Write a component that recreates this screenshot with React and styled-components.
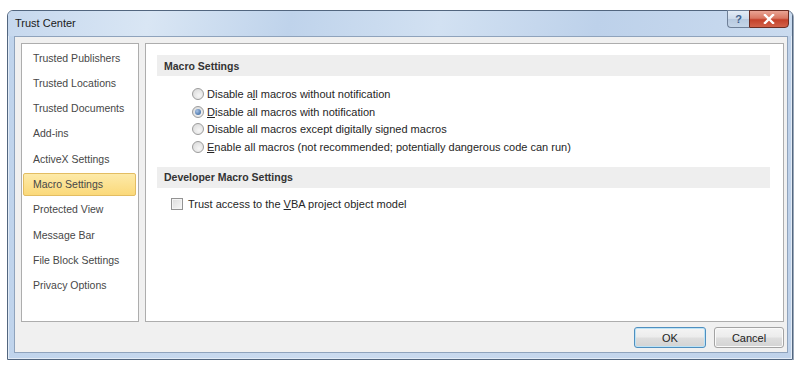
import React from 'react'
import styled, { createGlobalStyle } from 'styled-components'

const GlobalStyle = createGlobalStyle`
  html, body {
    margin: 0;
    background: #ffffff;
  }
  body {
    font-family: "Liberation Sans", Arial, sans-serif;
    font-size: 11px;
    color: #222;
  }
`

const navItems = [
  'Trusted Publishers',
  'Trusted Locations',
  'Trusted Documents',
  'Add-ins',
  'ActiveX Settings',
  'Macro Settings',
  'Protected View',
  'Message Bar',
  'File Block Settings',
  'Privacy Options',
]

const macroOptions = [
  <>Disable a<u>l</u>l macros without notification</>,
  <><u>D</u>isable all macros with notification</>,
  <>Disable all macros except di<u>g</u>itally signed macros</>,
  <><u>E</u>nable all macros (not recommended; potentially dangerous code can run)</>,
]

const App = () => {
  return (
    <>
      <GlobalStyle />
      <Page>
        <Window>
          <TitleBar>
            <Title>Trust Center</Title>
            <CaptionButtons>
              <HelpButton>?</HelpButton>
              <CloseButton>
                <svg width="12" height="10" viewBox="0 0 12 10">
                  <path d="M2 1 L10 9 M10 1 L2 9" stroke="#fff" strokeWidth="2.4" strokeLinecap="square" />
                </svg>
              </CloseButton>
            </CaptionButtons>
          </TitleBar>
          <Client>
            <Panels>
              <Nav>
                {navItems.map((item) => (
                  <NavItem key={item} $active={item === 'Macro Settings'}>{item}</NavItem>
                ))}
              </Nav>
              <Content>
                <SectionHeader>Macro Settings</SectionHeader>
                <RadioList>
                  {macroOptions.map((label, i) => (
                    <OptionRow key={i}>
                      <Radio $checked={i === 1} />
                      <span>{label}</span>
                    </OptionRow>
                  ))}
                </RadioList>
                <SectionHeader>Developer Macro Settings</SectionHeader>
                <CheckRow>
                  <Checkbox />
                  <span>Trust access to the <u>V</u>BA project object model</span>
                </CheckRow>
              </Content>
            </Panels>
            <ButtonRow>
              <DialogButton $default>OK</DialogButton>
              <DialogButton>Cancel</DialogButton>
            </ButtonRow>
          </Client>
        </Window>
      </Page>
    </>
  )
}

export default App

const Page = styled.div`
  padding: 10px 0 0 7px;
`

const Window = styled.div`
  box-sizing: border-box;
  width: 786px;
  height: 350px;
  display: flex;
  flex-direction: column;
  border: 1px solid #52667f;
  border-radius: 6px 6px 0 0;
  background: linear-gradient(90deg, #c0d4ec 0%, #cbdbef 40%, #bfd2ea 100%);
  box-shadow: 1px 1px 0 #9aa8ba, inset 0 0 0 1px #e3ecf7;
`

const TitleBar = styled.div`
  height: 25px;
  display: flex;
  justify-content: space-between;
  align-items: flex-start;
  padding-left: 7px;
  border-radius: 5px 5px 0 0;
  background: linear-gradient(100deg, #c6d8ee 0%, #d9e6f4 18%, #bfd3eb 36%, #d2e1f2 55%, #bdd1ea 75%, #cadbef 100%);
`

const Title = styled.div`
  padding-top: 6px;
  font-size: 11px;
  color: #1a1a1a;
`

const CaptionButtons = styled.div`
  display: flex;
  margin-right: 3px;
  margin-top: -1px;
`

const CaptionBase = styled.div`
  box-sizing: border-box;
  height: 18px;
  display: flex;
  align-items: center;
  justify-content: center;
`

const HelpButton = styled(CaptionBase)`
  width: 22px;
  border: 1px solid #6f8098;
  border-right: none;
  border-radius: 0 0 0 4px;
  background: linear-gradient(#e4ecf6 0%, #ccdaeb 50%, #b7c9df 51%, #c5d5e8 100%);
  color: #40608c;
  font-weight: bold;
  font-size: 11px;
`

const CloseButton = styled(CaptionBase)`
  width: 40px;
  border: 1px solid #6b2c22;
  border-radius: 0 0 4px 0;
  background: linear-gradient(#eaa494 0%, #d97863 45%, #c4412a 55%, #d2624a 100%);
`

const Client = styled.div`
  flex: 1;
  display: flex;
  flex-direction: column;
  margin: 0 4px 6px 6px;
  padding: 6px 3px 4px 6px;
  border: 1px solid #8fa3bc;
  background: #f0f0f0;
`

const Panels = styled.div`
  flex: 1;
  display: flex;
  gap: 6px;
`

const Nav = styled.div`
  width: 118px;
  box-sizing: border-box;
  display: flex;
  flex-direction: column;
  gap: 2.33px;
  padding: 2px 1px 0 1px;
  border: 1px solid #adadad;
  background: #fff;
`

const NavItem = styled.div`
  box-sizing: border-box;
  height: 23px;
  display: flex;
  align-items: center;
  padding-left: 9px;
  margin-right: 1px;
  border: 1px solid ${(p) => (p.$active ? '#e3bd62' : 'transparent')};
  border-radius: 2px;
  background: ${(p) => (p.$active ? 'linear-gradient(#fdeaa9, #fbd97a)' : 'transparent')};
  color: #474747;
  font-size: 10.5px;
  white-space: nowrap;
`

const Content = styled.div`
  flex: 1;
  display: flex;
  flex-direction: column;
  padding: 11px 13px 0 11px;
  border: 1px solid #adadad;
  background: #fff;
`

const SectionHeader = styled.div`
  height: 21px;
  display: flex;
  align-items: center;
  padding-left: 7px;
  background: #eeeeee;
  font-weight: bold;
  font-size: 10.5px;
  color: #333;
`

const RadioList = styled.div`
  display: flex;
  flex-direction: column;
  margin: 9px 0 11px;
  padding-left: 35px;
`

const OptionRow = styled.div`
  height: 17.7px;
  display: flex;
  align-items: center;
  gap: 3px;
  color: #262626;
  white-space: nowrap;
`

const Radio = styled.span`
  position: relative;
  box-sizing: border-box;
  width: 12px;
  height: 12px;
  border-radius: 50%;
  border: 1px solid #9c9c9c;
  background: radial-gradient(circle at 60% 65%, #f6f6f6, #d6d6d6);
  flex-shrink: 0;

  &::after {
    content: '';
    display: ${(p) => (p.$checked ? 'block' : 'none')};
    position: absolute;
    left: 2px;
    top: 2px;
    width: 6px;
    height: 6px;
    border-radius: 50%;
    background: radial-gradient(circle at 35% 35%, #a9c4e6, #2a5a96);
  }
`

const CheckRow = styled.div`
  display: flex;
  align-items: center;
  gap: 5px;
  height: 18px;
  margin-top: 7px;
  padding-left: 14px;
  color: #262626;
  white-space: nowrap;
`

const Checkbox = styled.span`
  box-sizing: border-box;
  width: 12px;
  height: 12px;
  border: 1px solid #939393;
  background: linear-gradient(135deg, #dcdcdc, #f7f7f7);
  box-shadow: inset 0 0 0 1px #f4f4f4;
  flex-shrink: 0;
`

const ButtonRow = styled.div`
  display: flex;
  justify-content: flex-end;
  gap: 8px;
  margin-top: 5px;
`

const DialogButton = styled.button`
  box-sizing: border-box;
  width: ${(p) => (p.$default ? '72px' : '70px')};
  height: 21px;
  padding: 0;
  border: 1px solid ${(p) => (p.$default ? '#4f8fbf' : '#a3a3a3')};
  border-radius: 3px;
  background: linear-gradient(#f4f4f4 0%, #ececec 48%, #dedede 52%, #d3d3d3 100%);
  box-shadow: ${(p) => (p.$default ? 'inset 0 0 0 1px #bde3f6' : 'inset 0 0 0 1px #fafafa')};
  font-family: "Liberation Sans", Arial, sans-serif;
  font-size: 11px;
  color: #222;
`
